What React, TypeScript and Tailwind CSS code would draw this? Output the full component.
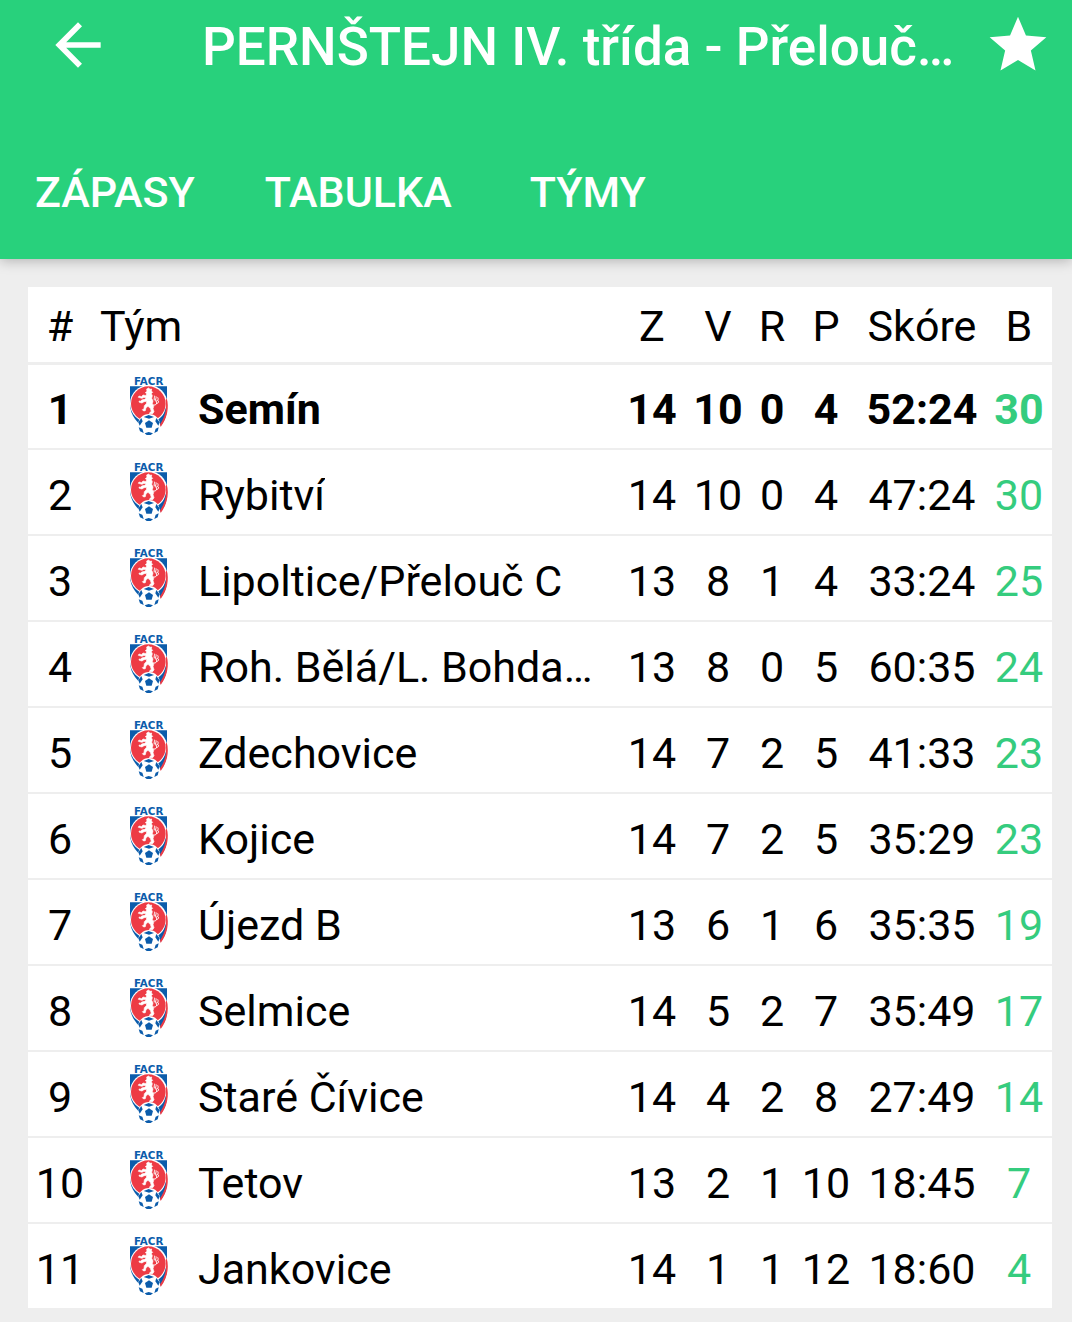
import { MdArrowBack, MdStar } from "react-icons/md";

interface Team {
  name: string;
  played: number;
  won: number;
  drawn: number;
  lost: number;
  score: string;
  points: number;
}

const teams: Team[] = [
  { name: "Semín", played: 14, won: 10, drawn: 0, lost: 4, score: "52:24", points: 30 },
  { name: "Rybitví", played: 14, won: 10, drawn: 0, lost: 4, score: "47:24", points: 30 },
  { name: "Lipoltice/Přelouč C", played: 13, won: 8, drawn: 1, lost: 4, score: "33:24", points: 25 },
  { name: "Roh. Bělá/L. Bohda…", played: 13, won: 8, drawn: 0, lost: 5, score: "60:35", points: 24 },
  { name: "Zdechovice", played: 14, won: 7, drawn: 2, lost: 5, score: "41:33", points: 23 },
  { name: "Kojice", played: 14, won: 7, drawn: 2, lost: 5, score: "35:29", points: 23 },
  { name: "Újezd B", played: 13, won: 6, drawn: 1, lost: 6, score: "35:35", points: 19 },
  { name: "Selmice", played: 14, won: 5, drawn: 2, lost: 7, score: "35:49", points: 17 },
  { name: "Staré Čívice", played: 14, won: 4, drawn: 2, lost: 8, score: "27:49", points: 14 },
  { name: "Tetov", played: 13, won: 2, drawn: 1, lost: 10, score: "18:45", points: 7 },
  { name: "Jankovice", played: 14, won: 1, drawn: 1, lost: 12, score: "18:60", points: 4 },
];

const tabs = ["ZÁPASY", "TABULKA", "TÝMY"];

function Crest() {
  return (
    <svg
      viewBox="30 18 120 174"
      className="w-10 h-[58px] mb-[6px] shrink-0 overflow-visible"
      aria-hidden="true"
    >
      <text
        x="86"
        y="41"
        textAnchor="middle"
        fontFamily="DejaVu Sans"
        fontWeight="700"
        fontSize="31"
        fill="#0b5cab"
      >
        FACR
      </text>
      {/* Shield */}
      <path d="M30 46H141V100C141 132 122 160 88 182C52 160 30 132 30 100Z" fill="#0b5cab" />
      <circle cx="86" cy="98" r="56" fill="#fff" />
      <path d="M137 112C132 134 118 146 106 150L122 164C136 148 142 130 141 104Z" fill="#0b5cab" />
      <path d="M140 82C148 108 142 142 122 168L120 160C136 138 141 112 137 88Z" fill="#ed3b45" />
      <circle cx="85" cy="98" r="52" fill="#ed3b45" />
      {/* Lion */}
      <path
        d="M80 54L86 51L90 55L95 54L94 60L98 64L94 68L97 74L95 82L99 90L97 98L101 106L99 113L102 122L98 128H88L91 123L94 121L91 112L84 106L78 110L76 119L71 120L67 116L72 114L73 104L79 98L80 91L72 92L66 96L58 94L57 90L62 91L65 87L74 85L79 81L72 79L66 82L55 79L57 75L65 77L69 72L78 74L80 68L76 65L81 61Z"
        fill="#fff"
        stroke="#fff"
        strokeWidth="2"
      />
      <path
        d="M98 102C110 104 112 96 108 91C104 86 110 82 108 76M108 91C114 90 116 84 113 79M108 97C114 98 117 94 115 89M103 88C101 82 105 78 103 74"
        fill="none"
        stroke="#fff"
        strokeWidth="3"
      />
      {/* Ball */}
      <circle cx="87" cy="162" r="33" fill="#fff" />
      <g fill="#0b5cab">
        <path d="M87 148L99 156L95 170H79L75 156Z" />
        <path d="M71 138L86 132L102 138L87 143Z" />
        <path d="M55 154L64 141L68 151L59 164Z" />
        <path d="M119 154L109 141L106 151L115 164Z" />
        <path d="M56 169L67 173L71 186L60 181Z" />
        <path d="M116 169L107 173L103 186L113 181Z" />
        <path d="M74 187L86 183L99 187L92 192H80Z" />
      </g>
    </svg>
  );
}

function Header() {
  return (
    <header className="bg-[#28d17c] text-white font-medium shadow-[0_2px_12px_rgba(0,0,0,0.25)]">
      <div className="flex items-center h-[90px] px-5 pl-11">
        <button aria-label="Zpět" className="shrink-0">
          <MdArrowBack className="w-[68px] h-[68px]" />
        </button>
        <h1 className="flex-1 min-w-0 truncate pt-1 pl-[90px] text-[53px] leading-[72px]">
          PERNŠTEJN IV. třída - Přelouč…
        </h1>
        <button aria-label="Oblíbené" className="shrink-0">
          <MdStar className="w-[68px] h-[68px]" />
        </button>
      </div>
      <nav className="flex pt-[72px] pb-9">
        {tabs.map((tab) => (
          <a
            key={tab}
            href={`#${tab.toLowerCase()}`}
            className="min-w-[202px] px-[35px] text-center text-[43px] leading-[61px]"
          >
            {tab}
          </a>
        ))}
      </nav>
    </header>
  );
}

function Standings() {
  return (
    <table className="w-full table-fixed border-collapse bg-white text-black text-center text-[43px] leading-[50px]">
      <colgroup>
        <col className="w-16" />
        <col />
        <col className="w-[68px]" />
        <col className="w-16" />
        <col className="w-11" />
        <col className="w-16" />
        <col className="w-32" />
        <col className="w-[66px]" />
      </colgroup>
      <thead>
        <tr className="h-[76px] border-b-3 border-[#eeeeee] *:font-normal *:p-0 *:pt-1">
          <th scope="col">#</th>
          <th scope="col">
            <div className="pl-2 text-left">Tým</div>
          </th>
          <th scope="col">Z</th>
          <th scope="col">V</th>
          <th scope="col">R</th>
          <th scope="col">P</th>
          <th scope="col">Skóre</th>
          <th scope="col">B</th>
        </tr>
      </thead>
      <tbody>
        {teams.map((team, index) => (
          <tr
            key={team.name}
            className="h-[86px] border-b-2 border-[#eeeeee] first:font-bold last:border-b-0 last:h-[85px] *:p-0 *:pt-[6px]"
          >
            <td>{index + 1}</td>
            <td>
              <div className="flex items-center gap-7 pl-[38px] text-left">
                <Crest />
                <span className="truncate">{team.name}</span>
              </div>
            </td>
            <td>{team.played}</td>
            <td>{team.won}</td>
            <td>{team.drawn}</td>
            <td>{team.lost}</td>
            <td>{team.score}</td>
            <td className="text-[#35cc7e]">{team.points}</td>
          </tr>
        ))}
      </tbody>
    </table>
  );
}

export default function App() {
  return (
    <div className="min-h-screen bg-[#eeeeee] font-[Roboto,sans-serif]">
      <Header />
      <main className="pt-7 pb-3 pl-7 pr-5">
        <Standings />
      </main>
    </div>
  );
}
